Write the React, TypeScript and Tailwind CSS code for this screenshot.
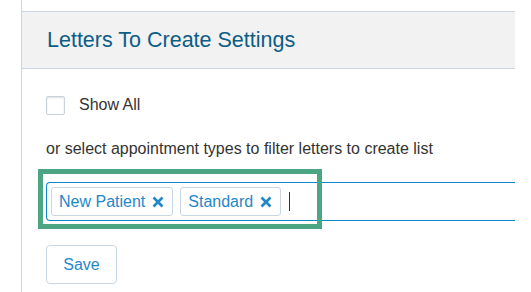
import React from "react";

function Tag({ label }: { label: string }) {
  return (
    <div className="flex h-[29px] items-center rounded-[3px] border border-[#c9d6e3] bg-white pl-[7px] pr-[8px] text-[16px] text-[#1f87c9]">
      <span>{label}</span>
      <svg className="ml-[7px]" width="12" height="12" viewBox="0 0 12 12">
        <path d="M1.5 1.5 L10.5 10.5 M10.5 1.5 L1.5 10.5" stroke="#1f87c9" strokeWidth="2.6" strokeLinecap="butt" />
      </svg>
    </div>
  );
}

export default function App() {
  return (
    <div
      className="relative h-[292px] w-[531px] overflow-hidden bg-white"
      style={{ fontFamily: '"Liberation Sans", Arial, sans-serif' }}
    >
      <div className="ml-[21px] flex h-full w-[494px] flex-col border-l border-[#c9d6e3]">
        <div className="mt-[11px] flex h-[58px] items-center border-y border-[#c9d6e3] bg-[#f2f2f2] pl-[25px]">
          <span className="text-[21.5px] text-[#0b5e86]">Letters To Create Settings</span>
        </div>
        <div className="flex flex-col pl-[24px]">
          <div className="mt-[24px] flex h-[24px] items-center">
            <div className="h-[19px] w-[19px] rounded-[2px] border border-[#c9d1d9] bg-white shadow-[inset_0_1px_2px_rgba(0,0,0,0.12)]" />
            <span className="ml-[14px] text-[16px] leading-[24px] text-[#333333]">Show All</span>
          </div>
          <div className="mt-[20px] text-[16px] leading-[24px] text-[#333333]">
            or select appointment types to filter letters to create list
          </div>
          <div className="mt-[21px] flex h-[39px] items-center gap-[7px] rounded-l-[4px] border border-r-0 border-[#0a88c8] pl-[4px]">
            <Tag label="New Patient" />
            <Tag label="Standard" />
            <div className="ml-[1px] h-[19px] w-[1px] bg-[#333]" />
          </div>
          <div className="mt-[24px]">
            <button className="h-[39px] w-[71px] rounded-[4px] border border-[#c9d6e3] bg-white text-[16px] text-[#1f87c9]">
              Save
            </button>
          </div>
        </div>
      </div>
      <div className="absolute left-[38px] top-[169px] h-[60px] w-[284px] border-[5px] border-[#4da683]" />
    </div>
  );
}
